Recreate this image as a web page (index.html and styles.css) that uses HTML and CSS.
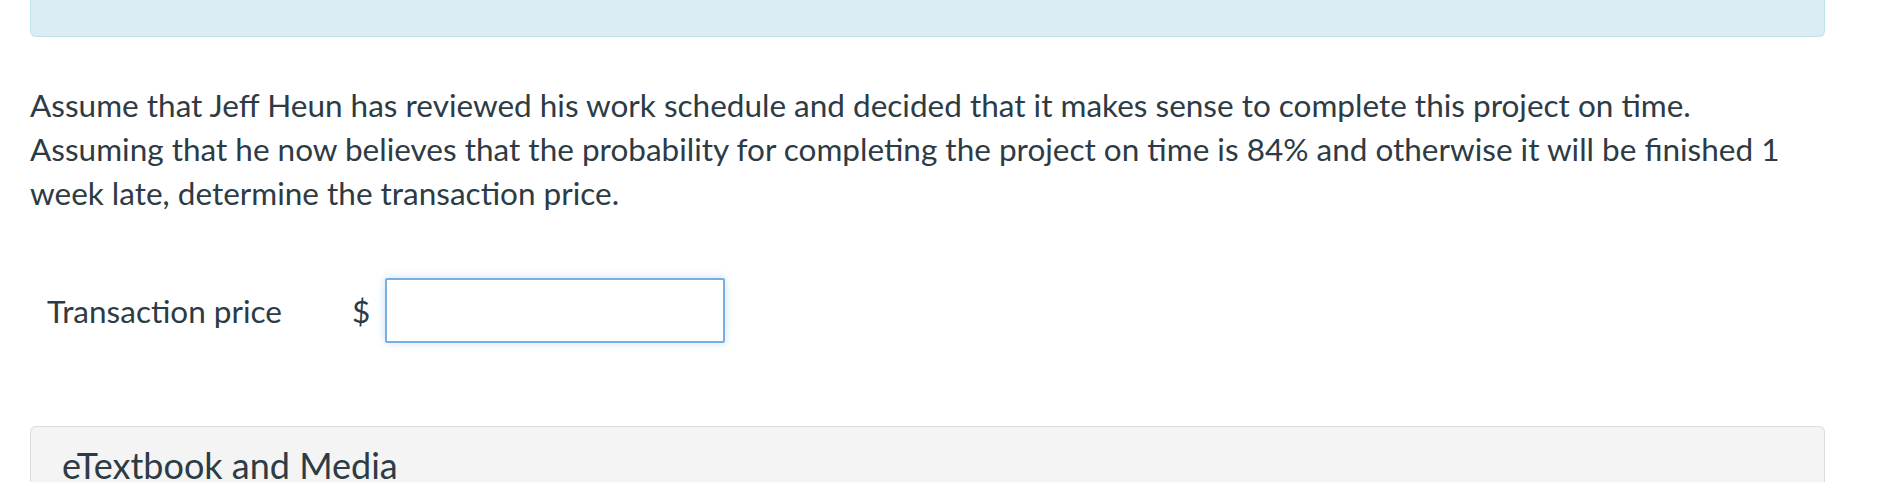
FILE: index.html
```html
<!DOCTYPE html>
<html lang="en">
<head>
<meta charset="utf-8">
<title>Question</title>
<link rel="stylesheet" href="styles.css">
</head>
<body>
<div class="page">
  <div class="notice"></div>
  <p class="question">Assume that Jeff Heun has reviewed his work schedule and decided that it makes sense to complete this project on time.<br>Assuming that he now believes that the probability for completing the project on time is 84% and otherwise it will be finished 1 week late, determine the transaction price.</p>
  <div class="answer-row">
    <span class="label">Transaction price</span>
    <span class="currency">$</span>
    <input class="answer-input" type="text" aria-label="Transaction price">
  </div>
  <div class="media">
    <div class="media-title">eTextbook and Media</div>
  </div>
</div>
</body>
</html>
```

FILE: styles.css
```css
html, body {
  margin: 0;
  padding: 0;
  background: #ffffff;
}
body {
  font-family: Lato, "Open Sans", "Liberation Sans", sans-serif;
  color: #2d3b45;
}
.page {
  padding: 0 55px 0 30px;
}
.notice {
  height: 36px;
  background: #dcecf4;
  border: 1px solid #c0e2ec;
  border-top: none;
  border-radius: 0 0 6px 6px;
}
.question {
  margin: 46px 0 0 0;
  font-size: 31.5px;
  line-height: 44px;
}
.answer-row {
  display: flex;
  align-items: center;
  margin-top: 63px;
  padding-left: 17px;
  font-size: 31.5px;
}
.label {
  width: 305px;
}
.currency {
  width: 33px;
}
.answer-input {
  box-sizing: border-box;
  width: 340px;
  height: 65px;
  margin: 0;
  border: 2px solid #78aee2;
  border-radius: 2px;
  box-shadow: 0 0 8px rgba(102, 160, 225, 0.35);
  background: #fff;
  outline: none;
  font: inherit;
}
.media {
  margin-top: 83px;
  height: 80px;
  background: #f4f4f4;
  border: 1px solid #dcdcdc;
  border-bottom: none;
  border-radius: 6px 6px 0 0;
  padding: 0 0 0 31px;
}
.media-title {
  font-size: 36px;
  line-height: 40px;
  padding-top: 18px;
}
```
